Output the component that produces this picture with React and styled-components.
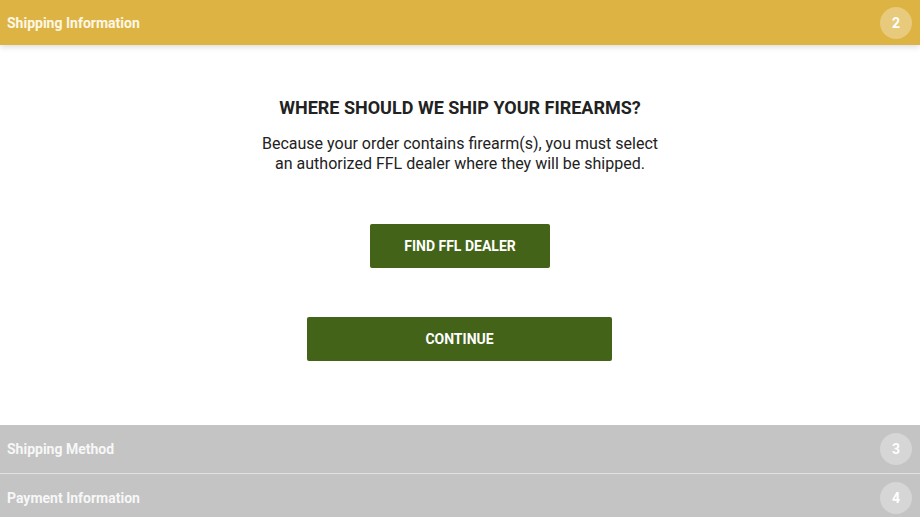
import React from 'react';
import styled, { createGlobalStyle } from 'styled-components';

const GlobalStyle = createGlobalStyle`
  body {
    margin: 0;
    font-family: Roboto, "Liberation Sans", Arial, sans-serif;
    background: #fff;
  }
`;

const Page = styled.div`
  width: 920px;
  height: 517px;
  overflow: hidden;
  display: flex;
  flex-direction: column;
`;

const StepBar = styled.div`
  position: relative;
  z-index: ${({ active }) => active ? 2 : 1};
  display: flex;
  align-items: center;
  justify-content: space-between;
  height: ${({ active }) => active ? '45px' : '48px'};
  padding: 0 8px 0 7px;
  background: ${({ active }) => active ? '#ddb443' : '#c4c4c4'};
  box-shadow: ${({ active }) => active ? '0 2px 6px rgba(0, 0, 0, 0.14)' : 'none'};
  border-bottom: ${({ divider }) => divider ? '1px solid #e2e2e2' : 'none'};
  flex-shrink: 0;
`;

const StepTitle = styled.span`
  font-size: 14px;
  font-weight: 700;
  color: ${({ active }) => active ? '#fdf7e6' : '#f7f7f7'};
`;

const StepNumber = styled.span`
  width: 32px;
  height: 32px;
  border-radius: 50%;
  background: rgba(255, 255, 255, 0.3);
  color: #fff;
  font-size: 14px;
  font-weight: 700;
  display: flex;
  align-items: center;
  justify-content: center;
`;

const Content = styled.div`
  height: 380px;
  box-sizing: border-box;
  padding-top: 52px;
  display: flex;
  flex-direction: column;
  align-items: center;
  text-align: center;
  flex-shrink: 0;
`;

const Heading = styled.h2`
  margin: 0;
  font-size: 18px;
  line-height: 22px;
  font-weight: 700;
  color: #222;
`;

const Lead = styled.p`
  margin: 15px 0 0;
  font-size: 16px;
  line-height: 20px;
  color: #222;
`;

const Button = styled.button`
  width: ${({ wide }) => wide ? '305px' : '180px'};
  height: 44px;
  margin-top: ${({ wide }) => wide ? '49px' : '50px'};
  margin-right: ${({ wide }) => wide ? '1px' : '0'};
  border: none;
  border-radius: 2px;
  background: #436318;
  color: #fff;
  font-family: inherit;
  font-size: 14px;
  font-weight: 700;
  cursor: pointer;
`;

const steps = [
  { title: 'Shipping Method', n: 3, divider: true },
  { title: 'Payment Information', n: 4 }
];

export default function App() {
  return (
    <Page>
      <GlobalStyle />
      <StepBar active>
        <StepTitle active>Shipping Information</StepTitle>
        <StepNumber>2</StepNumber>
      </StepBar>
      <Content>
        <Heading>WHERE SHOULD WE SHIP YOUR FIREARMS?</Heading>
        <Lead>
          Because your order contains firearm(s), you must select<br />
          an authorized FFL dealer where they will be shipped.
        </Lead>
        <Button>FIND FFL DEALER</Button>
        <Button wide>CONTINUE</Button>
      </Content>
      {steps.map(step => (
        <StepBar key={step.n} divider={step.divider}>
          <StepTitle>{step.title}</StepTitle>
          <StepNumber>{step.n}</StepNumber>
        </StepBar>
      ))}
    </Page>
  );
}
